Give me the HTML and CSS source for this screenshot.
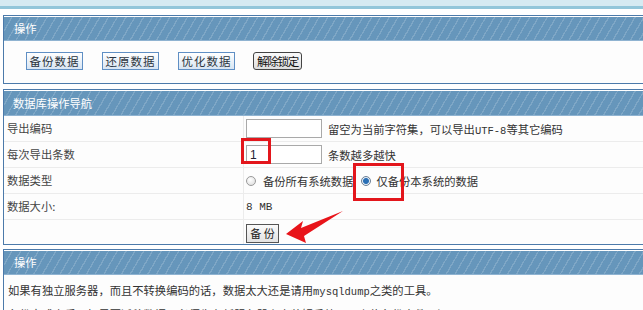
FILE: index.html
```html
<!DOCTYPE html>
<html lang="zh-CN">
<head>
    <meta charset="UTF-8">
    <title>数据库备份</title>
    <link rel="stylesheet" href="styles.css">
</head>
<body>

    <!-- top strip -->
    <div class="topbar"></div>

    <!-- 操作 -->
    <div class="box">
        <div class="box-head">操作</div>
        <div class="box-body actions">
            <button class="btn-blue">备份数据</button>
            <button class="btn-blue">还原数据</button>
            <button class="btn-blue">优化数据</button>
            <button class="btn-old">解除锁定</button>
        </div>
    </div>

    <!-- 数据库操作导航 -->
    <div class="box box-nav">
        <div class="box-head tall">数据库操作导航</div>
        <div class="row">
            <div class="label">导出编码</div>
            <div class="value">
                <input class="field" type="text">
                <span class="hint">留空为当前字符集，可以导出<span class="mono">UTF-8</span>等其它编码</span>
            </div>
        </div>
        <div class="row">
            <div class="label">每次导出条数</div>
            <div class="value">
                <input class="field" type="text" value="1">
                <span class="hint">条数越多越快</span>
            </div>
        </div>
        <div class="row">
            <div class="label">数据类型</div>
            <div class="value">
                <span class="radio"></span>
                <span class="opt">备份所有系统数据</span>
                <span class="radio checked"></span>
                <span class="opt second">仅备份本系统的数据</span>
            </div>
        </div>
        <div class="row">
            <div class="label">数据大小:</div>
            <div class="value"><span class="mono size">8 MB</span></div>
        </div>
        <div class="row last">
            <div class="label"></div>
            <div class="value"><button class="btn-backup">备 份</button></div>
        </div>
    </div>

    <!-- 操作 notes -->
    <div class="box">
        <div class="box-head">操作</div>
        <div class="box-body notes">
            <p>如果有独立服务器，而且不转换编码的话，数据太大还是请用<span class="mono">mysqldump</span>之类的工具。</p>
            <p>备份完成之后，如果要迁移数据，必须先在新服务器上安装好系统，再上传备份文件再还原即可。</p>
        </div>
    </div>

    <!-- red marks drawn on the screenshot -->
    <div class="mark mark-count"></div>
    <div class="mark mark-type"></div>
    <svg class="arrow" width="64" height="40" viewBox="0 0 64 40">
        <path d="M5 29 L22 16 L20 23 L62 6 L23 31 L25 38 Z" fill="#e8141a"/>
    </svg>

</body>
</html>
```

FILE: styles.css
```css
body {
    margin: 0;
    padding: 0;
    font-family: "Noto Sans CJK SC", "DejaVu Sans", sans-serif;
    font-size: 11.3px;
    color: #333;
    background: #fff;
    overflow: hidden;
    position: relative;
    height: 310px;
}

/* top strip */
.topbar {
    height: 6px;
    background: #d6eaf2;
    border-bottom: 3px solid #93c6da;
    margin-bottom: 6px;
}

/* boxes */
.box {
    margin-left: 3px;
    margin-right: -20px;
    border: 1px solid #4c7aaa;
    background: #fdfdfd;
}

.box + .box {
    margin-top: 5px;
}

.box-nav + .box {
    margin-top: 4px;
}

.box-head {
    height: 23px;
    line-height: 23px;
    border-top: 1px solid #fff;
    border-bottom: 1px solid #8fb3d1;
    padding-left: 10px;
    color: #fff;
    background-color: #6696bb;
    background-image: repeating-linear-gradient(120deg, rgba(255,255,255,0) 0, rgba(255,255,255,0) 6.3px, rgba(255,255,255,0.16) 6.3px, rgba(255,255,255,0.16) 7.6px);
}

.box-head.tall {
    height: 24px;
    line-height: 24px;
    padding-left: 9px;
}

.actions {
    height: 42px;
    padding: 11px 0 0 22px;
    box-sizing: border-box;
    display: flex;
    align-items: flex-start;
    gap: 19px;
}

.btn-blue {
    height: 18px;
    width: 57px;
    padding: 0;
    font-family: inherit;
    font-size: 11.5px;
    letter-spacing: 1px;
    color: #2c3540;
    border: 1px solid #5f8fc4;
    background: linear-gradient(#ffffff, #d8e5f3);
    cursor: pointer;
}

.btn-old {
    height: 18px;
    width: 49px;
    padding: 0;
    margin-left: -1px;
    font-family: inherit;
    font-size: 11.5px;
    letter-spacing: -1.2px;
    color: #111;
    border: 1px solid #444;
    border-radius: 3px;
    background: linear-gradient(#fafafa, #dedede);
}

/* form rows */
.row {
    display: flex;
    height: 25px;
    border-bottom: 1px solid #ececec;
}

.row.last {
    border-bottom: none;
    height: 24px;
}

.label {
    width: 236px;
    padding-left: 3px;
    line-height: 25px;
    border-right: 1px solid #ececec;
    color: #444;
}

.value {
    flex: 1;
    padding-left: 2px;
    display: flex;
    align-items: center;
}

.field {
    width: 76px;
    height: 19px;
    box-sizing: border-box;
    margin: 0;
    padding: 1px 3px;
    border: 1px solid #a9a9a9;
    font-family: "Liberation Sans", sans-serif;
    font-size: 12px;
    color: #223;
}

.hint {
    margin-left: 6px;
    color: #333;
}

.mono {
    font-family: "Liberation Mono", monospace;
    font-size: 10.5px;
}

.size {
    color: #333;
    font-size: 11px;
}

.radio {
    width: 10px;
    height: 10px;
    border-radius: 50%;
    border: 1px solid #9a9a9a;
    background: radial-gradient(circle at 40% 35%, #fff, #d9d9d9);
    box-sizing: border-box;
}

.radio.checked {
    border-color: #6b7f95;
    background: radial-gradient(circle, #2a6fb5 0, #2a6fb5 2.5px, #e6eef6 3.5px, #cfd8e2 100%);
}

.opt {
    margin-left: 7px;
    margin-right: 8px;
}

.opt.second {
    margin-left: 5px;
}

.btn-backup {
    height: 19px;
    width: 33px;
    margin-top: 2px;
    padding: 0;
    font-family: inherit;
    font-size: 11px;
    color: #222;
    border: 1px solid #555;
    background: linear-gradient(#fbfbfb, #e2e2e2);
}

/* notes */
.notes {
    padding: 4px 0 0 4px;
    height: 60px;
}

.notes p {
    margin: 0;
    line-height: 22px;
}

/* red annotation marks */
.mark {
    position: absolute;
    border: 3px solid #e3161c;
}

.mark-count {
    left: 241px;
    top: 138px;
    width: 24px;
    height: 20px;
}

.mark-type {
    left: 353px;
    top: 163px;
    width: 45px;
    height: 32px;
}

.arrow {
    position: absolute;
    left: 281px;
    top: 205px;
}
```
